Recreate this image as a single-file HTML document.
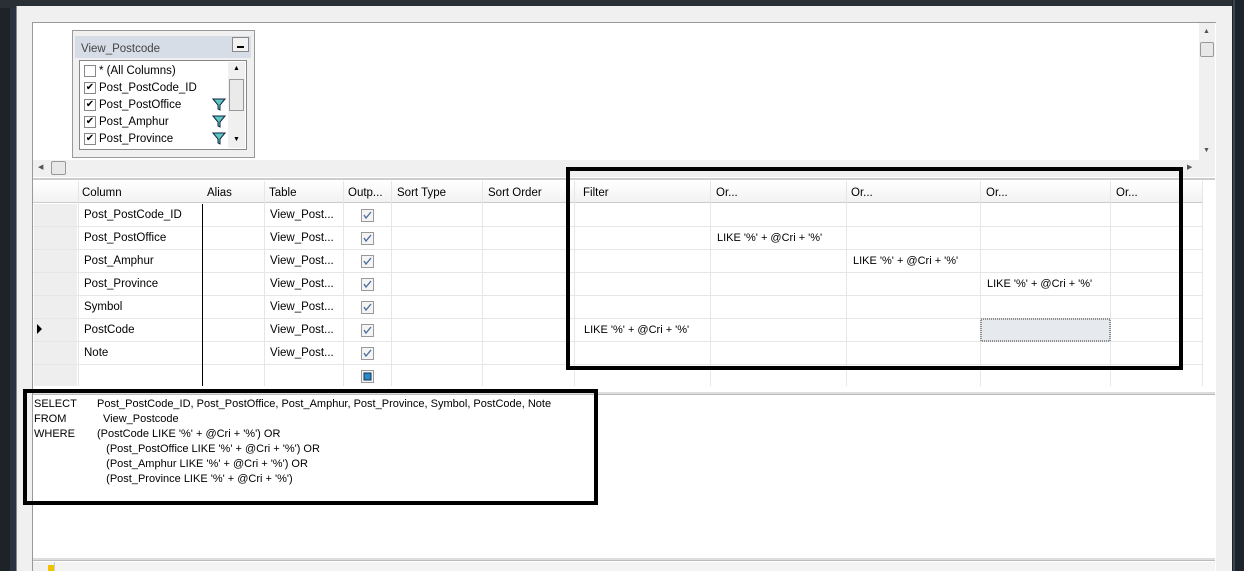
<!DOCTYPE html>
<html><head><style>
*{margin:0;padding:0;box-sizing:border-box}
body{width:1244px;height:571px;overflow:hidden;background:#f0f0f0;font-family:"Liberation Sans",sans-serif;font-size:11.5px;color:#000;position:relative}
.a{position:absolute}
.t{position:absolute;white-space:nowrap}
</style></head><body>
<div class="a" style="left:0;top:0;width:16px;height:571px;background:#1e2328"></div>
<div class="a" style="left:10px;top:0;width:6px;height:571px;background:#2b3340"></div>
<div class="a" style="left:0;top:0;width:1244px;height:8px;background:#2a2f36"></div>
<div class="a" style="left:16px;top:6px;width:1216px;height:565px;background:#f0f0f0;border-left:1px solid #888"></div>
<div class="a" style="left:1232px;top:0;width:12px;height:571px;background:#1d232b"></div>
<div class="a" style="left:1233px;top:0;width:2px;height:571px;background:#3a4350"></div>
<div class="a" style="left:32px;top:22px;width:1184px;height:549px;background:#fff;border-left:1px solid #999;border-top:1px solid #999"></div>
<div class="a" style="left:1199px;top:23px;width:16px;height:137px;background:#f0f0f0"></div>
<div class="a" style="left:1200px;top:42px;width:14px;height:15px;background:#e8e8e8;border:1px solid #999;border-radius:2px"></div>
<div class="t" style="left:1203px;top:28px;font-size:7px;color:#555">▲</div>
<div class="t" style="left:1203px;top:147px;font-size:7px;color:#555">▼</div>
<div class="a" style="left:33px;top:160px;width:1182px;height:17px;background:#f0f0f0"></div>
<div class="a" style="left:51px;top:161px;width:15px;height:14px;background:#e8e8e8;border:1px solid #999;border-radius:2px"></div>
<div class="t" style="left:38px;top:163px;font-size:7px;color:#555">◀</div>
<div class="t" style="left:1187px;top:163px;font-size:7px;color:#555">▶</div>
<div class="a" style="left:33px;top:178px;width:1182px;height:2px;background:#ccc"></div>
<div class="a" style="left:72px;top:30px;width:183px;height:128px;background:#f0f0f0;border:1px solid #999"></div>
<div class="a" style="left:75px;top:36px;width:176px;height:22px;background:#d6dde6"></div>
<div class="t" style="left:81px;top:43px;color:#444">View_Postcode</div>
<div class="a" style="left:232px;top:37px;width:17px;height:15px;background:#f2f2f2;border:1px solid #888"></div>
<div class="a" style="left:237px;top:46px;width:7px;height:2px;background:#000"></div>
<div class="a" style="left:79px;top:60px;width:168px;height:90px;background:#fff;border:1px solid #888"></div>
<div class="a" style="left:228px;top:62px;width:17px;height:86px;background:#f0f0f0"></div>
<div class="a" style="left:229px;top:79px;width:15px;height:32px;background:#eaeaea;border:1px solid #999"></div>
<div class="t" style="left:233px;top:65px;font-size:7px">▲</div>
<div class="t" style="left:233px;top:136px;font-size:7px">▼</div>
<div class="a" style="left:84px;top:65px;width:12px;height:12px;border:1px solid #888;background:#fff"></div>
<div class="t" style="left:99px;top:65px">* (All Columns)</div>
<div class="a" style="left:84px;top:82px;width:12px;height:12px;border:1px solid #888;font-size:10px;line-height:10px;text-align:center">✔</div>
<div class="t" style="left:99px;top:82px">Post_PostCode_ID</div>
<div class="a" style="left:84px;top:99px;width:12px;height:12px;border:1px solid #888;font-size:10px;line-height:10px;text-align:center">✔</div>
<div class="t" style="left:99px;top:99px">Post_PostOffice</div>
<div class="a" style="left:84px;top:116px;width:12px;height:12px;border:1px solid #888;font-size:10px;line-height:10px;text-align:center">✔</div>
<div class="t" style="left:99px;top:116px">Post_Amphur</div>
<div class="a" style="left:84px;top:133px;width:12px;height:12px;border:1px solid #888;font-size:10px;line-height:10px;text-align:center">✔</div>
<div class="t" style="left:99px;top:133px">Post_Province</div>
<svg class="a" style="left:212px;top:98px" width="14" height="48"><g fill="#5cc8c0" stroke="#124" stroke-width="1"><path d="M1 1H13L8 7V12L6 11V7Z"/><path d="M1 18H13L8 24V29L6 28V24Z"/><path d="M1 35H13L8 41V46L6 45V41Z"/></g></svg>
<div class="a" style="left:33px;top:181px;width:1170px;height:22px;background:linear-gradient(#fff,#f2f2f2);border-bottom:1px solid #ccc"></div>
<div class="t" style="left:82px;top:187px">Column</div>
<div class="t" style="left:207px;top:187px">Alias</div>
<div class="t" style="left:269px;top:187px">Table</div>
<div class="t" style="left:348px;top:187px">Outp...</div>
<div class="t" style="left:397px;top:187px">Sort Type</div>
<div class="t" style="left:488px;top:187px">Sort Order</div>
<div class="t" style="left:583px;top:187px">Filter</div>
<div class="t" style="left:716px;top:187px">Or...</div>
<div class="t" style="left:851px;top:187px">Or...</div>
<div class="t" style="left:986px;top:187px">Or...</div>
<div class="t" style="left:1116px;top:187px">Or...</div>
<svg class="a" style="left:33px;top:181px" width="1170" height="205">
<g stroke="#e6e6e6" stroke-width="1">
<line x1="45.5" y1="0" x2="45.5" y2="205"/><line x1="231.5" y1="0" x2="231.5" y2="205"/><line x1="310.5" y1="0" x2="310.5" y2="205"/><line x1="358.5" y1="0" x2="358.5" y2="205"/><line x1="449.5" y1="0" x2="449.5" y2="205"/><line x1="541.5" y1="0" x2="541.5" y2="205"/><line x1="677.5" y1="0" x2="677.5" y2="205"/><line x1="813.5" y1="0" x2="813.5" y2="205"/><line x1="947.5" y1="0" x2="947.5" y2="205"/><line x1="1077.5" y1="0" x2="1077.5" y2="205"/><line x1="1169.5" y1="0" x2="1169.5" y2="205"/>
<line x1="0" y1="45.5" x2="1170" y2="45.5"/><line x1="0" y1="68.5" x2="1170" y2="68.5"/><line x1="0" y1="91.5" x2="1170" y2="91.5"/><line x1="0" y1="114.5" x2="1170" y2="114.5"/><line x1="0" y1="137.5" x2="1170" y2="137.5"/><line x1="0" y1="160.5" x2="1170" y2="160.5"/><line x1="0" y1="183.5" x2="1170" y2="183.5"/>
</g>
<line x1="169.5" y1="23" x2="169.5" y2="205" stroke="#000"/>
<g fill="#eee"><rect x="1" y="23" width="43" height="22"/><rect x="1" y="46" width="43" height="22"/><rect x="1" y="69" width="43" height="22"/><rect x="1" y="92" width="43" height="22"/><rect x="1" y="115" width="43" height="22"/><rect x="1" y="138" width="43" height="22"/><rect x="1" y="161" width="43" height="22"/><rect x="1" y="184" width="43" height="21"/></g>
<path d="M4 143L9 148L4 153Z" fill="#000"/>
<rect x="948" y="138" width="129" height="22" fill="#e6eaee" stroke="#333" stroke-dasharray="1 1"/>
<g fill="#f4f4f4" stroke="#999"><rect x="328.5" y="28.5" width="12" height="12"/><rect x="328.5" y="51.5" width="12" height="12"/><rect x="328.5" y="74.5" width="12" height="12"/><rect x="328.5" y="97.5" width="12" height="12"/><rect x="328.5" y="120.5" width="12" height="12"/><rect x="328.5" y="143.5" width="12" height="12"/><rect x="328.5" y="166.5" width="12" height="12"/><rect x="328.5" y="189.5" width="12" height="12"/></g>
<g fill="none" stroke="#4a6a9a" stroke-width="1.3"><path d="M331 34l2 3 5-6"/><path d="M331 57l2 3 5-6"/><path d="M331 80l2 3 5-6"/><path d="M331 103l2 3 5-6"/><path d="M331 126l2 3 5-6"/><path d="M331 149l2 3 5-6"/><path d="M331 172l2 3 5-6"/></g>
<rect x="331" y="192" width="7" height="7" fill="#2a8ac8" stroke="#135"/>
</svg>
<div class="t" style="left:84px;top:209px">Post_PostCode_ID</div>
<div class="t" style="left:84px;top:232px">Post_PostOffice</div>
<div class="t" style="left:84px;top:255px">Post_Amphur</div>
<div class="t" style="left:84px;top:278px">Post_Province</div>
<div class="t" style="left:84px;top:301px">Symbol</div>
<div class="t" style="left:84px;top:324px">PostCode</div>
<div class="t" style="left:84px;top:347px">Note</div>
<div class="t" style="left:270px;top:209px">View_Post...</div>
<div class="t" style="left:270px;top:232px">View_Post...</div>
<div class="t" style="left:270px;top:255px">View_Post...</div>
<div class="t" style="left:270px;top:278px">View_Post...</div>
<div class="t" style="left:270px;top:301px">View_Post...</div>
<div class="t" style="left:270px;top:324px">View_Post...</div>
<div class="t" style="left:270px;top:347px">View_Post...</div>
<div class="t" style="left:717px;top:232px;font-size:11px">LIKE '%' + @Cri + '%'</div>
<div class="t" style="left:853px;top:255px;font-size:11px">LIKE '%' + @Cri + '%'</div>
<div class="t" style="left:987px;top:278px;font-size:11px">LIKE '%' + @Cri + '%'</div>
<div class="t" style="left:584px;top:324px;font-size:11px">LIKE '%' + @Cri + '%'</div>
<div class="a" style="left:33px;top:392px;width:1182px;height:3px;background:#ddd;border-bottom:1px solid #bbb"></div>
<div class="a" style="left:33px;top:558px;width:1182px;height:3px;background:#ddd;border-bottom:1px solid #bbb"></div>
<div class="a" style="left:33px;top:562px;width:1182px;height:9px;background:#f4f4f4"></div>
<div class="a" style="left:33px;top:562px;width:22px;height:9px;background:#f0f0f0;border-right:1px solid #ccc"></div>
<div class="a" style="left:48px;top:565px;width:6px;height:6px;background:#f2c200"></div>
<div class="t" style="left:34px;top:397px;font-size:11px;line-height:15px">SELECT</div>
<div class="t" style="left:97px;top:397px;font-size:11px;line-height:15px">Post_PostCode_ID, Post_PostOffice, Post_Amphur, Post_Province, Symbol, PostCode, Note</div>
<div class="t" style="left:34px;top:412px;font-size:11px;line-height:15px">FROM</div>
<div class="t" style="left:103px;top:412px;font-size:11px;line-height:15px">View_Postcode</div>
<div class="t" style="left:34px;top:427px;font-size:11px;line-height:15px">WHERE</div>
<div class="t" style="left:97px;top:427px;font-size:11px;line-height:15px">(PostCode LIKE '%' + @Cri + '%') OR<br>&nbsp;&nbsp;&nbsp;(Post_PostOffice LIKE '%' + @Cri + '%') OR<br>&nbsp;&nbsp;&nbsp;(Post_Amphur LIKE '%' + @Cri + '%') OR<br>&nbsp;&nbsp;&nbsp;(Post_Province LIKE '%' + @Cri + '%')</div>
<div class="a" style="left:566px;top:167px;width:617px;height:203px;border:4px solid #000"></div>
<div class="a" style="left:23px;top:389px;width:575px;height:116px;border:4px solid #000"></div>
</body></html>
